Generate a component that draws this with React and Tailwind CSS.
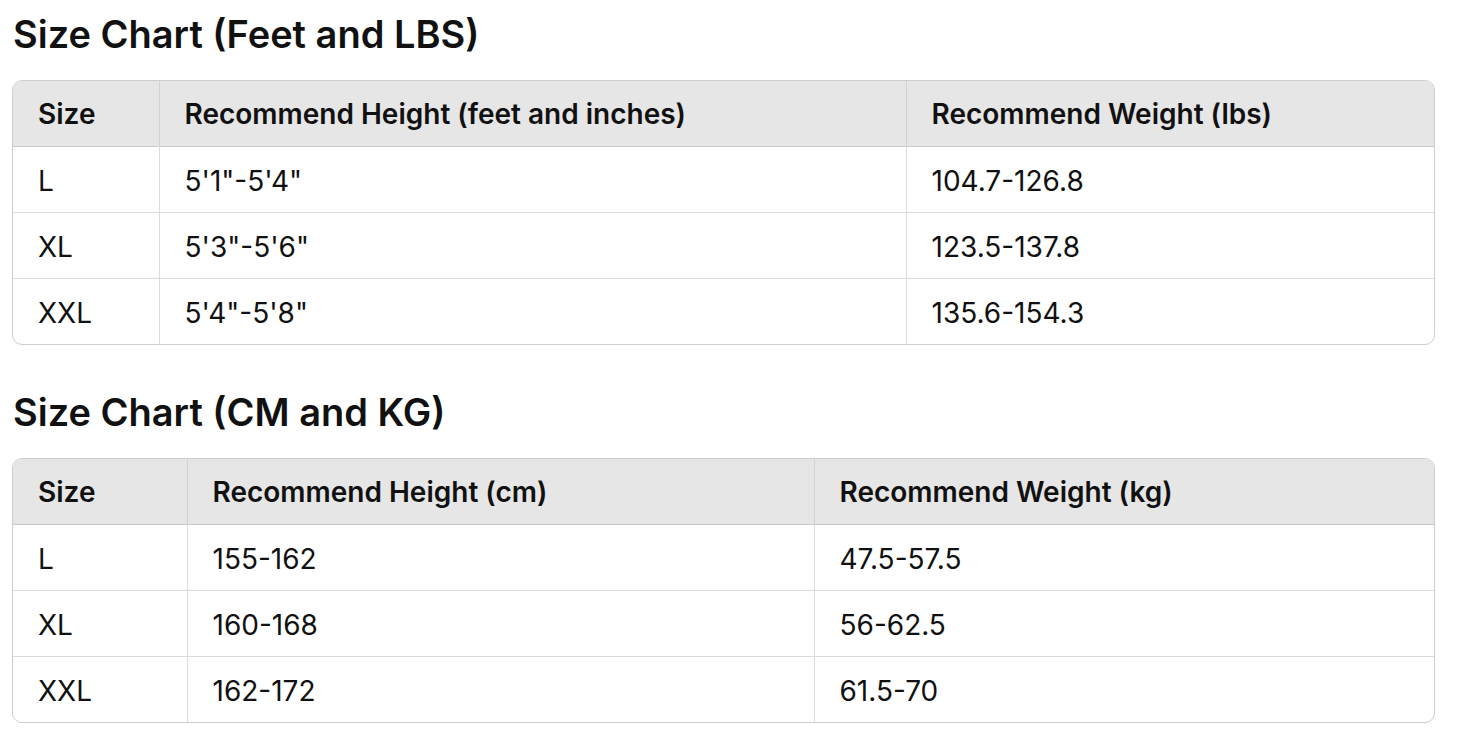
const tables = [
  {
    title: 'Size Chart (Feet and LBS)',
    cols: ['w-[146px]', 'w-[747px]', ''],
    head: ['Size', 'Recommend Height (feet and inches)', 'Recommend Weight (lbs)'],
    rows: [
      ['L', `5'1"-5'4"`, '104.7-126.8'],
      ['XL', `5'3"-5'6"`, '123.5-137.8'],
      ['XXL', `5'4"-5'8"`, '135.6-154.3'],
    ],
  },
  {
    title: 'Size Chart (CM and KG)',
    cols: ['w-[174px]', 'w-[627px]', ''],
    head: ['Size', 'Recommend Height (cm)', 'Recommend Weight (kg)'],
    rows: [
      ['L', '155-162', '47.5-57.5'],
      ['XL', '160-168', '56-62.5'],
      ['XXL', '162-172', '61.5-70'],
    ],
  },
];

function SizeTable({ title, cols, head, rows, first }) {
  return (
    <section className={first ? '' : 'mt-[45px]'}>
      <h2 className="text-[38px] leading-[44px] font-semibold text-[#111] h-[44px] pl-[1px]">
        {title}
      </h2>
      <div className="mt-[24px] w-[1423px] rounded-[10px] border border-[#cdcdcd] overflow-hidden">
        <table className="w-full border-collapse table-fixed text-[28px] text-[#111]">
          <colgroup>
            {cols.map((c, i) => (
              <col key={i} className={c} />
            ))}
          </colgroup>
          <thead>
            <tr className="bg-[#e6e6e6] h-[65px] border-b border-[#c9c9c9]">
              {head.map((h, i) => (
                <th
                  key={i}
                  className={`text-left font-semibold pl-[25px] pt-[2px] ${i > 0 ? 'border-l border-[#d2d2d2]' : ''}`}
                >
                  {h}
                </th>
              ))}
            </tr>
          </thead>
          <tbody>
            {rows.map((r, ri) => (
              <tr
                key={ri}
                className={`h-[66px] ${ri < rows.length - 1 ? 'border-b border-[#dcdcdc]' : ''}`}
              >
                {r.map((c, i) => (
                  <td
                    key={i}
                    className={`pl-[25px] pt-[3px] font-normal ${i > 0 ? 'border-l border-[#dcdcdc]' : ''}`}
                  >
                    {c}
                  </td>
                ))}
              </tr>
            ))}
          </tbody>
        </table>
      </div>
    </section>
  );
}

export default function App() {
  return (
    <div
      className="min-h-screen bg-white pl-[12px] pt-[12px]"
      style={{ fontFamily: 'Inter, "Noto Sans", sans-serif' }}
    >
      {tables.map((t, i) => (
        <SizeTable key={i} {...t} first={i === 0} />
      ))}
    </div>
  );
}
